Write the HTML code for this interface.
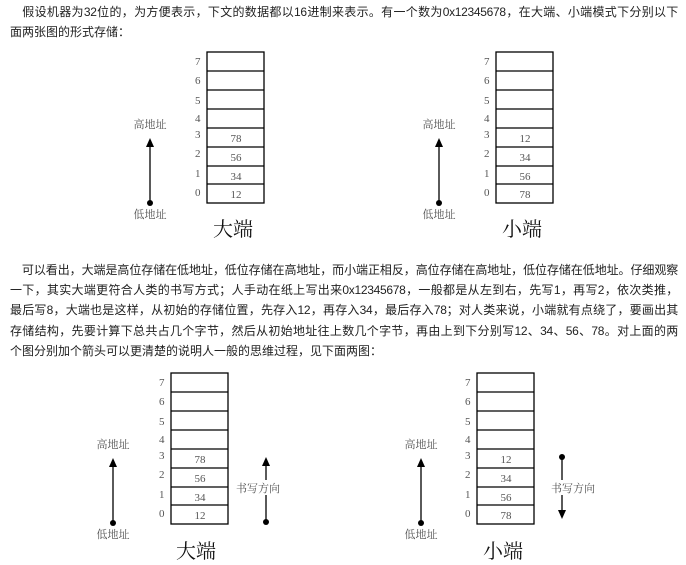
<!DOCTYPE html>
<html><head><meta charset="utf-8"><style>
html,body{margin:0;padding:0;background:#fff;width:686px;height:565px;overflow:hidden}
.t{position:absolute;left:10px;font-family:"Liberation Sans","Noto Sans CJK SC",sans-serif;font-size:12px;color:#222;white-space:nowrap;line-height:20px}
.j{width:668px;text-align:justify;text-align-last:justify;white-space:normal;overflow:hidden;height:20px;letter-spacing:-0.3px}
svg{position:absolute;left:0;top:0}
svg text{font-family:"Liberation Serif","Noto Serif CJK SC",serif;fill:#555}
</style></head><body>
<div class="t j" style="top:2px">&#8195;假设机器为32位的，为方便表示，下文的数据都以16进制来表示。有一个数为0x12345678，在大端、小端模式下分别以下</div>
<div class="t" style="top:22px">面两张图的形式存储：</div>
<div class="t j" style="top:260px">&#8195;可以看出，大端是高位存储在低地址，低位存储在高地址，而小端正相反，高位存储在高地址，低位存储在低地址。仔细观察</div>
<div class="t j" style="top:280px">一下，其实大端更符合人类的书写方式；人手动在纸上写出来0x12345678，一般都是从左到右，先写1，再写2，依次类推，</div>
<div class="t j" style="top:300px">最后写8，大端也是这样，从初始的存储位置，先存入12，再存入34，最后存入78；对人类来说，小端就有点绕了，要画出其</div>
<div class="t j" style="top:321px">存储结构，先要计算下总共占几个字节，然后从初始地址往上数几个字节，再由上到下分别写12、34、56、78。对上面的两</div>
<div class="t" style="top:341px">个图分别加个箭头可以更清楚的说明人一般的思维过程，见下面两图：</div>
<svg width="686" height="565" viewBox="0 0 686 565">
<defs>
<g id="box" fill="none" stroke="#000" stroke-width="1.3">
<rect x="0" y="0" width="57" height="151"/>
<line x1="0" y1="19" x2="57" y2="19"/><line x1="0" y1="38" x2="57" y2="38"/>
<line x1="0" y1="57" x2="57" y2="57"/><line x1="0" y1="76" x2="57" y2="76"/>
<line x1="0" y1="95" x2="57" y2="95"/><line x1="0" y1="114" x2="57" y2="114"/>
<line x1="0" y1="132" x2="57" y2="132"/>
</g>
<g id="lbl" font-size="11">
<text x="-12" y="13">7</text><text x="-12" y="32">6</text><text x="-12" y="52">5</text>
<text x="-12" y="70">4</text><text x="-12" y="86">3</text><text x="-12" y="105">2</text>
<text x="-12" y="125">1</text><text x="-12" y="144">0</text>
</g>
<g id="addr">
<text x="0" y="0" font-size="11" text-anchor="middle">高地址</text>
<path d="M0 10 L-4 19 L4 19 Z" fill="#000"/>
<line x1="0" y1="18" x2="0" y2="74" stroke="#000" stroke-width="1.3"/>
<circle cx="0" cy="75" r="3" fill="#000"/>
<text x="0" y="90" font-size="11" text-anchor="middle">低地址</text>
</g>
</defs>
<g transform="translate(207,52)"><use href="#box"/><use href="#lbl"/>
<g font-size="11" text-anchor="middle"><text x="29" y="90">78</text><text x="29" y="109">56</text><text x="29" y="128">34</text><text x="29" y="146">12</text></g></g>
<g transform="translate(150,128)"><use href="#addr"/></g>
<text x="233" y="236" font-size="20" text-anchor="middle" style="fill:#111">大端</text>
<g transform="translate(496,52)"><use href="#box"/><use href="#lbl"/>
<g font-size="11" text-anchor="middle"><text x="29" y="90">12</text><text x="29" y="109">34</text><text x="29" y="128">56</text><text x="29" y="146">78</text></g></g>
<g transform="translate(439,128)"><use href="#addr"/></g>
<text x="522" y="236" font-size="20" text-anchor="middle" style="fill:#111">小端</text>
<g transform="translate(171,373)"><use href="#box"/><use href="#lbl"/>
<g font-size="11" text-anchor="middle"><text x="29" y="90">78</text><text x="29" y="109">56</text><text x="29" y="128">34</text><text x="29" y="146">12</text></g></g>
<g transform="translate(113,448)"><use href="#addr"/></g>
<path d="M266 457 L262 466 L270 466 Z" fill="#000"/>
<line x1="266" y1="465" x2="266" y2="480" stroke="#000" stroke-width="1.3"/>
<line x1="266" y1="495" x2="266" y2="521" stroke="#000" stroke-width="1.3"/>
<circle cx="266" cy="522" r="3" fill="#000"/>
<text x="236" y="492" font-size="11">书写方向</text>
<text x="196" y="558" font-size="20" text-anchor="middle" style="fill:#111">大端</text>
<g transform="translate(477,373)"><use href="#box"/><use href="#lbl"/>
<g font-size="11" text-anchor="middle"><text x="29" y="90">12</text><text x="29" y="109">34</text><text x="29" y="128">56</text><text x="29" y="146">78</text></g></g>
<g transform="translate(421,448)"><use href="#addr"/></g>
<circle cx="562" cy="457" r="3" fill="#000"/>
<line x1="562" y1="457" x2="562" y2="480" stroke="#000" stroke-width="1.3"/>
<line x1="562" y1="495" x2="562" y2="511" stroke="#000" stroke-width="1.3"/>
<path d="M562 519 L558 510 L566 510 Z" fill="#000"/>
<text x="551" y="492" font-size="11">书写方向</text>
<text x="503" y="558" font-size="20" text-anchor="middle" style="fill:#111">小端</text>
</svg>
</body></html>
